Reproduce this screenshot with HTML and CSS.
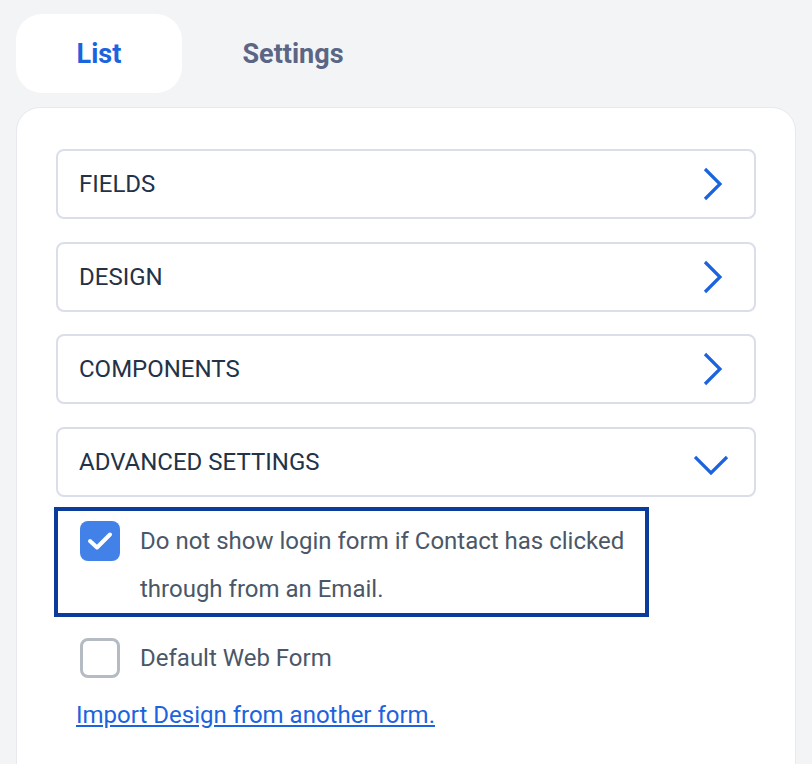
FILE: index.html
```html
<!DOCTYPE html>
<html lang="en">
<head>
    <meta charset="UTF-8">
    <meta name="viewport" content="width=device-width, initial-scale=1.0">
    <title>Form Builder</title>
    <link rel="stylesheet" href="styles.css">
</head>
<body>
    <!-- Tabs -->
    <div class="tabs">
        <button class="tab active">List</button>
        <button class="tab">Settings</button>
    </div>

    <div class="panel">
        <!-- Accordion sections -->
        <div class="section">
            <span>FIELDS</span>
            <svg class="chevron" viewBox="0 0 36 36"><path d="M11 3 L26 18 L11 33"/></svg>
        </div>
        <div class="section">
            <span>DESIGN</span>
            <svg class="chevron" viewBox="0 0 36 36"><path d="M11 3 L26 18 L11 33"/></svg>
        </div>
        <div class="section">
            <span>COMPONENTS</span>
            <svg class="chevron" viewBox="0 0 36 36"><path d="M11 3 L26 18 L11 33"/></svg>
        </div>
        <div class="section">
            <span>ADVANCED SETTINGS</span>
            <svg class="chevron" viewBox="0 0 36 36"><path d="M1 13 L17 29 L33 13"/></svg>
        </div>

        <!-- Advanced options -->
        <label class="option focused">
            <span class="box checked">
                <svg viewBox="0 0 40 40"><path d="M10 20 L17 26.5 L30 13.5"/></svg>
            </span>
            <span class="option-text">Do not show login form if Contact has clicked through from an Email.</span>
        </label>
        <label class="option">
            <span class="box"></span>
            <span class="option-text">Default Web Form</span>
        </label>
        <a href="#" class="import-link">Import Design from another form.</a>
    </div>
</body>
</html>
```

FILE: styles.css
```css
/* General Styles */
body {
    margin: 0;
    padding: 14px 16px 0;
    font-family: Roboto, "Liberation Sans", sans-serif;
    background-color: #f3f4f6;
}

/* Tabs */
.tabs {
    display: flex;
    gap: 28px;
}

.tab {
    width: 166px;
    height: 79px;
    border: none;
    border-radius: 26px;
    background: transparent;
    font-family: inherit;
    font-size: 27px;
    font-weight: 700;
    color: #5b6685;
    padding: 0;
    cursor: pointer;
}

.tab.active {
    background: #fff;
    color: #1c63de;
}

/* Panel */
.panel {
    margin-top: 14px;
    width: 780px;
    min-height: 700px;
    box-sizing: border-box;
    padding: 41px 39px 40px;
    background: #fff;
    border: 1px solid #e7e9ed;
    border-radius: 24px;
}

.section {
    display: flex;
    align-items: center;
    justify-content: space-between;
    height: 70px;
    box-sizing: border-box;
    padding: 0 24px 0 21px;
    margin-bottom: 22.67px;
    border: 2px solid #d9deea;
    border-radius: 8px;
    font-size: 24px;
    color: #233247;
}

.section:last-of-type {
    margin-bottom: 10px;
}

.chevron {
    width: 36px;
    height: 36px;
    fill: none;
    stroke: #1c63de;
    stroke-width: 3.2;
}

/* Checkbox options */
.option {
    display: flex;
    width: max-content;
    align-items: flex-start;
    gap: 20px;
    margin-left: -2px;
    padding: 6px 15px 0 22px;
    border: 4px solid transparent;
    font-size: 24px;
    line-height: 48px;
    color: #4b5768;
}

.option.focused {
    border-color: #0b3c9c;
    margin-bottom: 7px;
}

.option-text {
    width: 490px;
}

.box {
    flex: none;
    width: 40px;
    height: 40px;
    margin-top: 4px;
    box-sizing: border-box;
    border: 3px solid #b5bbc2;
    border-radius: 8px;
}

.box.checked {
    border: none;
    background: #4281e8;
}

.box svg {
    display: block;
    width: 40px;
    height: 40px;
    fill: none;
    stroke: #fff;
    stroke-width: 4;
    stroke-linecap: round;
    stroke-linejoin: round;
}

.import-link {
    display: block;
    margin: 5px 0 0 20px;
    font-size: 24px;
    line-height: 48px;
    color: #1c63de;
}
```
